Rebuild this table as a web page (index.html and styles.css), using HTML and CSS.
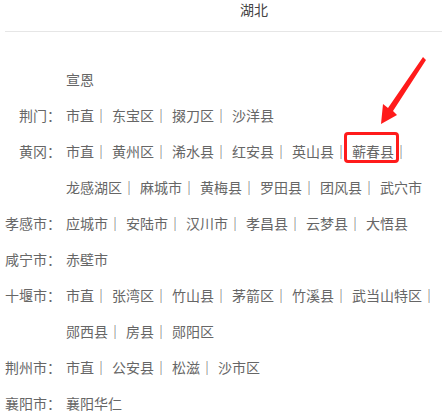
FILE: index.html
```html
<!DOCTYPE html>
<html lang="zh-CN">
<head>
<meta charset="utf-8">
<title>湖北</title>
<link rel="stylesheet" href="styles.css">
</head>
<body>
<div class="page">
  <header class="top"><h1 class="title">湖北</h1></header>
  <div class="list">
    <div class="row"><div class="label"></div><div class="vals"><span class="it">宣恩</span></div></div>
    <div class="row"><div class="label">荆门：</div><div class="vals"><span class="it">市直｜</span><span class="it">东宝区｜</span><span class="it">掇刀区｜</span><span class="it">沙洋县</span></div></div>
    <div class="row"><div class="label">黄冈：</div><div class="vals"><span class="it">市直｜</span><span class="it">黄州区｜</span><span class="it">浠水县｜</span><span class="it">红安县｜</span><span class="it">英山县｜</span><span class="it">蕲春县｜</span><span class="it">龙感湖区｜</span><span class="it">麻城市｜</span><span class="it">黄梅县｜</span><span class="it">罗田县｜</span><span class="it">团风县｜</span><span class="it">武穴市</span></div></div>
    <div class="row"><div class="label">孝感市：</div><div class="vals"><span class="it">应城市｜</span><span class="it">安陆市｜</span><span class="it">汉川市｜</span><span class="it">孝昌县｜</span><span class="it">云梦县｜</span><span class="it">大悟县</span></div></div>
    <div class="row"><div class="label">咸宁市：</div><div class="vals"><span class="it">赤壁市</span></div></div>
    <div class="row"><div class="label">十堰市：</div><div class="vals"><span class="it">市直｜</span><span class="it">张湾区｜</span><span class="it">竹山县｜</span><span class="it">茅箭区｜</span><span class="it">竹溪县｜</span><span class="it">武当山特区｜</span><span class="it">郧西县｜</span><span class="it">房县｜</span><span class="it">郧阳区</span></div></div>
    <div class="row"><div class="label">荆州市：</div><div class="vals"><span class="it">市直｜</span><span class="it">公安县｜</span><span class="it">松滋｜</span><span class="it">沙市区</span></div></div>
    <div class="row"><div class="label">襄阳市：</div><div class="vals"><span class="it">襄阳华仁</span></div></div>
  </div>
  <div class="mark-box"></div>
  <svg class="mark-arrow" width="442" height="417" viewBox="0 0 442 417">
    <polygon points="423,57 426,60 393,111 397,115 381,124 383,104 388,108" fill="#ff1b1b"/>
  </svg>
</div>
</body>
</html>
```
FILE: styles.css
```css
html, body {
  margin: 0;
  padding: 0;
  overflow: hidden;
  background: #fff;
}
body {
  font-family: "Noto Sans CJK SC", "Noto Sans", sans-serif;
  font-size: 14px;
  color: #666;
}
.page {
  position: relative;
  width: 498px;
  padding-left: 5px;
  height: 417px;
}
.top {
  border-bottom: 1px solid #e6e6e6;
  padding-bottom: 13px;
}
.title {
  margin: 0;
  font-size: 14px;
  font-weight: normal;
  line-height: 18px;
  text-align: center;
  color: #444;
}
.list {
  padding-top: 29px;
}
.row {
  display: flex;
  column-gap: 5px;
  line-height: 36px;
}
.label {
  width: 56px;
  flex: none;
  text-align: right;
}
.vals {
  width: 376px;
  display: flex;
  flex-wrap: wrap;
  column-gap: 4px;
}
.it {
  white-space: nowrap;
}
.mark-box {
  position: absolute;
  left: 344px;
  top: 132px;
  width: 55px;
  height: 31px;
  box-sizing: border-box;
  border: 3px solid #ff1b1b;
  border-radius: 4px;
}
.mark-arrow {
  position: absolute;
  left: 0;
  top: 0;
}
```
